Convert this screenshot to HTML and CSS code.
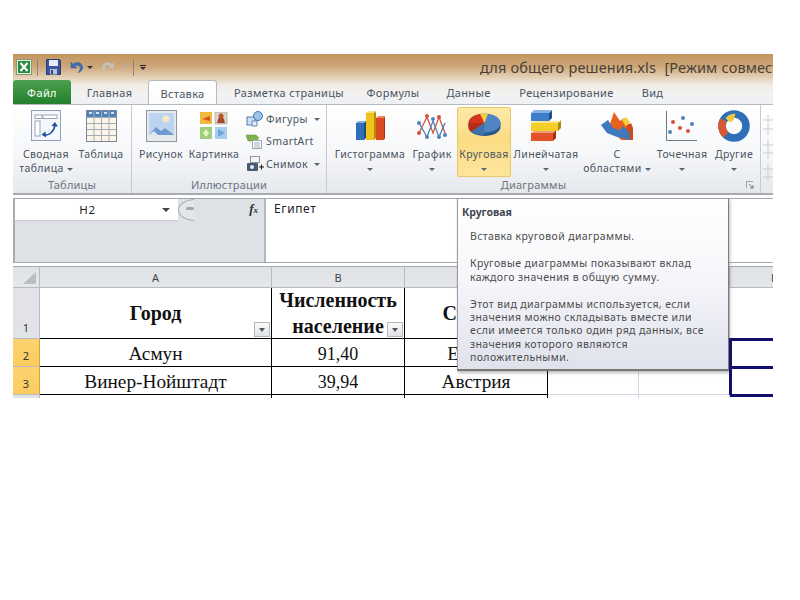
FILE: index.html
```html
<!DOCTYPE html>
<html lang="ru">
<head>
<meta charset="utf-8">
<title>Excel</title>
<link rel="stylesheet" href="styles.css">
</head>
<body>
<main class="window">
  <header class="chrome">
    <div class="titlebar">
      <div class="qat">
        <svg class="qi" width="16" height="18" viewBox="0 0 16 18"><rect x=".5" y="1.500" width="15" height="15" fill="#e8efdd" stroke="#7f9a77"/><rect x="2" y="3" width="12" height="12" fill="#2c8a3c"/><path d="M4.500 5l7 8M11.500 5l-7 8" stroke="#fff" stroke-width="2"/></svg>
        <i class="qsep qsep1"></i>
        <svg class="qi qsave" width="15" height="16" viewBox="0 0 15 16"><path d="M.5.5h13l1 1v14H.5z" fill="#3c54a4" stroke="#2b3a78"/><rect x="3" y="1" width="9" height="6" fill="#e7ecf6"/><rect x="4" y="10" width="7" height="5.500" fill="#b9c1d6"/><rect x="5" y="11" width="2" height="4" fill="#34447e"/></svg>
        <svg class="qi qundo" width="14" height="13" viewBox="0 0 14 13"><path d="M2 1v6h6L5.500 5C7 3.500 10 4 11 6c.7 1.800-.3 4-2 5.500 3.500-.7 5-3.500 4.500-6C13 2 8 0 4 3.300z" fill="#3f6fb4" stroke="#2f5a98" stroke-width=".5"/></svg>
        <i class="arrow arrow-ink qarr1"></i>
        <svg class="qi qredo" width="14" height="13" viewBox="0 0 14 13"><path d="M12 1v6H6l2.500-2C7 3.500 4 4 3 6c-.7 1.800.3 4 2 5.500C1.500 10.800 0 8 .5 5.500 1 2 6 0 10 3.300z" fill="#c3c3bd"/></svg>
        <i class="arrow arrow-dim qarr2"></i>
        <i class="qsep qsep2"></i>
        <span class="qcustom"><b></b><i class="arrow arrow-ink"></i></span>
      </div>
      <div class="doc">для общего решения.xls&nbsp; [Режим совместимости]</div>
    </div>
    <nav class="tabs">
      <span class="tab tab-file">Файл</span>
      <span class="tab">Главная</span>
      <span class="tab tab-on">Вставка</span>
      <span class="tab">Разметка страницы</span>
      <span class="tab">Формулы</span>
      <span class="tab">Данные</span>
      <span class="tab">Рецензирование</span>
      <span class="tab">Вид</span>
    </nav>
  </header>

  <section class="ribbon">
    <div class="group g-tables">
      <div class="tools">
        <div class="big w-pivot">
          <svg width="31" height="32" viewBox="0 0 31 32"><rect x=".5" y=".5" width="29" height="30" fill="#f4f7fb" stroke="#8f9fb5"/><rect x="4" y="5" width="7" height="3.500" fill="#fff" stroke="#9aa5b5"/><rect x="12" y="5" width="14" height="3.500" fill="#fff" stroke="#9aa5b5"/><rect x="4" y="11" width="5" height="15" fill="#fff" stroke="#9aa5b5"/><path d="M12 25c6 1 11-3 12-10" fill="none" stroke="#1f4f9e" stroke-width="1.600"/><path d="M20.500 16l3.500-4 3 4.500zM14.500 21.500l-4 3 4.500 3z" fill="#1f4f9e"/></svg>
          <span>Сводная<br>таблица <i class="arrow"></i></span>
        </div>
        <div class="big w-table">
          <svg width="31" height="32" viewBox="0 0 31 32"><rect x=".5" y=".5" width="30" height="31" fill="#fdf6e8" stroke="#7d8794"/><rect x="1" y="1" width="29" height="6" fill="#4f81bd"/><path d="M1 7.500h29M1 13.500h29M1 19.500h29M1 25.500h29M8 1v30M15.500 1v30M23 1v30" stroke="#a4aeb9" fill="none"/><path d="M3 3h3M10 3h3M18 3h3M25 3h3" stroke="#fff" stroke-width="1.500"/></svg>
          <span>Таблица</span>
        </div>
      </div>
      <div class="glabel">Таблицы</div>
    </div>

    <div class="group g-illus">
      <div class="tools">
        <div class="big w-pic">
          <svg width="31" height="32" viewBox="0 0 31 32"><rect x=".5" y=".5" width="30" height="31" fill="#e6e8ec" stroke="#8d96a2"/><rect x="3" y="3" width="25" height="22" fill="#bcd4ef"/><circle cx="20" cy="9" r="3.500" fill="#f6e9c2"/><path d="M3 25l7-8 5 4 4-3 9 7z" fill="#6f9ad0"/><path d="M3 25l5-4 4 4z" fill="#dbe7f5"/></svg>
          <span>Рисунок</span>
        </div>
        <div class="big w-clip">
          <svg class="clip" width="28" height="28" viewBox="0 0 28 28"><rect x="0" y="0" width="12" height="12" fill="#f0b83e"/><path d="M2 7l8-3v5z" fill="#d9531e"/><rect x="15" y="0" width="12" height="12" fill="#d9d3c8" stroke="#9a9488" stroke-width=".5"/><circle cx="21" cy="4" r="2.500" fill="#b4552b"/><path d="M17 11l1.500-5h5l1.500 5z" fill="#a7482e"/><rect x="0" y="15" width="12" height="12" fill="#9fcf7d"/><path d="M6 17l3 4-3 4-3-4z" fill="#e8f4c8"/><rect x="15" y="15" width="12" height="12" fill="#a9cdee"/><path d="M18 17l7 4-7 4z" fill="#6ea4dc"/></svg>
          <span>Картинка</span>
        </div>
        <div class="smalls">
          <div class="small"><svg width="18" height="18" viewBox="0 0 18 18"><rect x="1" y="7" width="8" height="8" fill="#cfe0f2" stroke="#4f7fb5"/><circle cx="12" cy="6" r="4.500" fill="#9cc3ea" stroke="#3f73ad"/><path d="M6 11h5v5H6z" fill="#e2edf8" stroke="#5c89ba"/></svg><span>Фигуры</span><i class="arrow"></i></div>
          <div class="small"><svg width="18" height="18" viewBox="0 0 18 18"><path d="M0 3h10l3 3-3 3H2z" fill="#7fb24a" stroke="#5f8c34" stroke-width=".5"/><rect x="6.500" y="8.500" width="9" height="8" fill="#fff" stroke="#9ea8b2"/><path d="M8 11h6M8 13h6M8 15h6" stroke="#9ab0c6"/></svg><span>SmartArt</span></div>
          <div class="small"><svg width="18" height="18" viewBox="0 0 18 18"><rect x="4.500" y="1.500" width="9" height="6" fill="none" stroke="#333" stroke-dasharray="1 1"/><rect x="1" y="8" width="11" height="8" rx="1" fill="#4a5a74"/><circle cx="6" cy="12" r="2" fill="#e6ecf4"/><path d="M13 12h5M15.500 9.500v5" stroke="#111"/></svg><span>Снимок</span><i class="arrow"></i></div>
        </div>
      </div>
      <div class="glabel">Иллюстрации</div>
    </div>

    <div class="group g-charts">
      <div class="tools">
        <div class="big w-hist">
          <svg width="31" height="32" viewBox="0 0 31 32"><path d="M1 13h8v17H1z" fill="#2f6fb8"/><path d="M1 13l2-2h8l-2 2z" fill="#7fb0e4"/><path d="M9 13l2-2v17l-2 2z" fill="#1c4a85"/><path d="M11 3h8v27h-8z" fill="#f0c21e"/><path d="M11 3l2-2h8l-2 2z" fill="#f8e27a"/><path d="M19 3l2-2v27l-2 2z" fill="#b58a0e"/><path d="M21 8h8v22h-8z" fill="#dd4a22"/><path d="M21 8l2-2h7l-1 2z" fill="#ef8a62"/><path d="M29 8l1-2v22l-1 2z" fill="#a9300f"/></svg>
          <span>Гистограмма<br><i class="arrow"></i></span>
        </div>
        <div class="big w-line">
          <svg width="30" height="30" viewBox="0 0 30 30"><path d="M2 22L10 6l6 16 6-16 6 16" fill="none" stroke="#d6503a" stroke-width="1.300"/><path d="M2 12l8 14 6-16 6 16 6-14" fill="none" stroke="#4f81bd" stroke-width="1.300"/><g fill="#d6503a"><circle cx="10" cy="5" r="2"/><circle cx="22" cy="6" r="2"/><circle cx="2" cy="22" r="2"/></g><g fill="#4f81bd"><circle cx="2" cy="12" r="2"/><circle cx="10" cy="26" r="2"/><circle cx="16" cy="8" r="2"/><circle cx="28" cy="24" r="2"/><circle cx="22" cy="26" r="2"/></g></svg>
          <span>График<br><i class="arrow"></i></span>
        </div>
        <div class="big w-pie on">
          <svg width="33" height="24" viewBox="0 0 33 24"><path d="M.5 10v4c0 5 7 9 16 9s16-4 16-9v-4z" fill="#27588f"/><ellipse cx="16.500" cy="10" rx="16" ry="9.500" fill="#4f85c4"/><path d="M16.500 10L.5 10C.5 6 6 1.500 13 .7z" fill="#d9341c"/><path d="M.5 10v4c0 2 1 3.500 2.500 5l13.500-9z" fill="#b82a14"/><path d="M16.500 10L12 .8C14 .4 17 .3 20 .8z" fill="#f4cd3d"/><path d="M16.500 10L3 18.500c3 2.500 8 3.500 13.500 3.500z" fill="#3f71ab"/></svg>
          <span>Круговая<br><i class="arrow"></i></span>
        </div>
        <div class="big w-bar">
          <svg width="31" height="32" viewBox="0 0 31 32"><path d="M0 3h18v8H0z" fill="#3f7dc8"/><path d="M18 3l3-3v8l-3 3z" fill="#1f4f8f"/><path d="M0 3l3-3h18l-3 3z" fill="#87b3e4"/><path d="M0 13h27v8H0z" fill="#f3cd28"/><path d="M27 13l3-3v8l-3 3z" fill="#a98a12"/><path d="M0 13l3-2h27l-3 2z" fill="#fae58a"/><path d="M0 23h22v8H0z" fill="#e4522a"/><path d="M22 23l3-3v8l-3 3z" fill="#a3330f"/><path d="M0 23l3-2h22l-3 2z" fill="#f39a72"/></svg>
          <span>Линейчатая<br><i class="arrow"></i></span>
        </div>
        <div class="big w-area">
          <svg width="32" height="30" viewBox="0 0 32 30"><path d="M8 16L13 1l6 9 4-3 8 9v13H20z" fill="#e9601f"/><path d="M21 9l4-3 4 5-4 5z" fill="#f3cd3a"/><path d="M25 15l5-3 2 5v12h-4z" fill="#c94d1f"/><path d="M0 14l7-5 5 8 7 2 3-4 6 6 1 8-13-3L6 22z" fill="#3f78bc"/></svg>
          <span>С<br>областями <i class="arrow"></i></span>
        </div>
        <div class="big w-scat">
          <svg width="32" height="32" viewBox="0 0 32 32"><path d="M.5 1v29.500H31" fill="none" stroke="#6a7684"/><g fill="#d6503a"><circle cx="7" cy="12" r="2"/><circle cx="14" cy="18" r="2"/><circle cx="22" cy="21" r="2"/></g><g fill="#4f81bd"><circle cx="4" cy="22" r="2"/><circle cx="17" cy="8" r="2"/><circle cx="26" cy="14" r="2"/></g></svg>
          <span>Точечная<br><i class="arrow"></i></span>
        </div>
        <div class="big w-other">
          <svg width="32" height="32" viewBox="0 0 32 32"><circle cx="16" cy="16" r="12" fill="none" stroke="#2f6fb8" stroke-width="7.500"/><path d="M5.500 10A12 12 0 0 0 8 25" fill="none" stroke="#d95a32" stroke-width="7.500"/><path d="M8 8c2-2 5-4 9-4l-2 6-3 2z" fill="#f2c93b" stroke="#f2c93b"/></svg>
          <span>Другие<br><i class="arrow"></i></span>
        </div>
      </div>
      <div class="glabel glabel-charts">Диаграммы<svg class="launcher" width="8" height="8" viewBox="0 0 8 8"><path d="M.5 7V.5H7" fill="none" stroke="#9aa3ad"/><path d="M3 3l4 4M7 4v3H4" fill="none" stroke="#6d7a88"/></svg></div>
    </div>

    <div class="group g-spark">
      <svg width="12" height="66" viewBox="0 0 12 66"><g fill="none" stroke="#c9ced4"><path d="M6 0v20M1 5h10M1 14h10"/><path d="M6 24v20M1 30h10M1 38h10"/><path d="M6 48v18M1 54h10M1 62h10"/></g></svg>
    </div>
  </section>

  <section class="formula">
    <div class="names">
      <div class="namebox"><span class="cellname">H2</span><i class="arrow arrow-dark"></i></div>
      <div class="namefill"></div>
    </div>
    <div class="fxbar">
      <span class="knob"><b></b></span>
      <em class="fx">f<small>x</small></em>
    </div>
    <div class="entry">Египет</div>
  </section>

  <section class="sheet">
    <div class="hd corner"><svg width="14" height="12" viewBox="0 0 14 12"><path d="M14 0v12H1z" fill="#b9bec6"/></svg></div>
    <div class="hd">A</div><div class="hd">B</div><div class="hd">C</div><div class="hd">D</div><div class="hd">E</div><div class="hd hd-f">F</div>

    <div class="rh"><span>1</span></div>
    <div class="c c-head"><b>Город</b><i class="filter"></i></div>
    <div class="c c-head c-wrap"><b>Численность<br>население</b><i class="filter"></i></div>
    <div class="c c-head"><b>Страна</b></div>
    <div class="c c-plain"></div><div class="c c-plain"></div><div class="c c-plain c-last"></div>

    <div class="rh rh-on"><span>2</span></div>
    <div class="c c-data">Асмун</div><div class="c c-data c-num">91,40</div><div class="c c-data">Египет</div>
    <div class="c c-plain c-line"></div><div class="c c-plain c-line"></div><div class="c c-sel"></div>

    <div class="rh rh-on"><span>3</span></div>
    <div class="c c-data">Винер-Нойштадт</div><div class="c c-data c-num">39,94</div><div class="c c-data">Австрия</div>
    <div class="c c-plain c-line"></div><div class="c c-plain c-line"></div><div class="c c-sel c-sel2"></div>

    <div class="rh"></div>
    <div class="c c-end"></div><div class="c c-end"></div><div class="c c-end"></div>
    <div class="c c-plain"></div><div class="c c-plain"></div><div class="c c-plain c-last"></div>
  </section>

  <aside class="tip">
    <h4>Круговая</h4>
    <p>Вставка круговой диаграммы.</p>
    <p>Круговые диаграммы показывают вклад<br>каждого значения в общую сумму.</p>
    <p>Этот вид диаграммы используется, если<br>значения можно складывать вместе или<br>если имеется только один ряд данных, все<br>значения которого являются<br>положительными.</p>
  </aside>
</main>
</body>
</html>
```

FILE: styles.css
```css
html, body { margin: 0; padding: 0; background: #fff; }
body { padding: 54px 27px 0 13px; font-family: "Noto Sans", "DejaVu Sans", sans-serif; font-size: 11px; color: #4a5461; }
.window { position: relative; width: 760px; height: 344px; overflow: hidden; background: #fff; }

.arrow { display: inline-block; width: 0; height: 0; border: 3px solid transparent; border-top: 3px solid #5c6672; border-bottom: 0; vertical-align: middle; }
.arrow-ink { border-top-color: #333; }
.arrow-dim { border-top-color: #b5b1a8; }
.arrow-dark { border-width: 4px; border-bottom: 0; border-top-color: #444; }

.chrome { background: linear-gradient(#c3965e 0, #cda77a 25%, #e2cdb0 45%, #f1ece4 62%, #f2f2f2 80%, #eef0f3 100%); height: 50px; }
.titlebar { height: 26px; display: flex; justify-content: space-between; align-items: center; }
.qat { display: flex; align-items: center; padding-left: 3px; height: 26px; }
.qsep { width: 1px; height: 17px; background: #8d8474; }
.qsep1 { margin: 0 8px 0 5px; }
.qsave { margin-right: 8px; }
.qundo { margin-right: 4px; }
.qarr1 { margin-right: 9px; }
.qredo { margin-right: 5px; }
.qarr2 { margin-right: 6px; }
.qsep2 { margin: 0 5px 0 0; }
.qcustom { display: flex; flex-direction: column; gap: 1px; align-items: center; margin-left: 1px; }
.qcustom b { width: 6px; height: 1px; background: #222; }
.doc { width: 293px; white-space: nowrap; overflow: hidden; font-size: 14.5px; letter-spacing: .1px; word-spacing: .4px; color: #4a4036; }

.tabs { display: grid; grid-template-columns: 58px 77px 69px 144px 64px 87px 109px 63px; height: 24px; align-items: stretch; justify-content: start; }
.tab { display: flex; align-items: center; justify-content: center; font-size: 11px; letter-spacing: .35px; color: #4a5461; padding-top: 1px; }
.tab-file { background: linear-gradient(#4da04f, #23802c); color: #fff; border-radius: 3px 3px 0 0; }
.tab-on { background: linear-gradient(#fff, #fafbfc); border: 1px solid #b5babf; border-bottom: 0; border-radius: 3px 3px 0 0; }

.ribbon { display: flex; border-top: 1px solid #b5babf; border-bottom: 2px solid #a7abb0; background: linear-gradient(#fff 0, #f6f7f9 55%, #e5e8ec 100%); box-sizing: border-box; height: 91px; }
.group { display: flex; flex-direction: column; border-right: 1px solid #c7cbd1; box-sizing: border-box; }
.g-tables { width: 119px; }
.g-illus { width: 195px; }
.g-charts { width: 434px; }
.g-spark { flex: 1; border: 0; padding: 10px 0 0 1px; overflow: hidden; }
.tools { flex: 1; display: flex; }
.glabel { position: relative; height: 15px; line-height: 14px; text-align: center; color: #6b7480; font-size: 11px; letter-spacing: .2px; }
.glabel-charts { padding-right: 20px; }
.launcher { position: absolute; right: 6px; top: 3px; }

.big { box-sizing: border-box; display: flex; flex-direction: column; align-items: center; height: 70px; margin-top: 2px; padding-top: 3px; font-size: 10.5px; letter-spacing: .35px; line-height: 14px; text-align: center; white-space: nowrap; }
.big svg { height: 32px; margin-bottom: 5px; flex: none; }
.big svg.clip { margin-top: 2px; margin-bottom: 7px; height: 28px; }
.big.on { background: linear-gradient(#fde9a8, #fbdc84 45%, #fde59c); border: 1px solid #e6c86a; border-radius: 2px; padding-top: 2px; }
.w-pivot { width: 66px; }
.w-table { width: 44px; }
.w-pic { width: 46px; margin-left: 6px; }
.w-clip { width: 52px; margin-left: 4px; }
.w-hist { width: 72px; margin-left: 7px; }
.w-line { width: 44px; margin-left: 4px; }
.w-pie { width: 54px; margin-left: 3px; }
.w-pie svg { height: 24px; margin: 3px 0 10px; }
.w-bar { width: 66px; margin-left: 2px; }
.w-area { width: 68px; margin-left: 4px; }
.w-scat { width: 54px; margin-left: 4px; }
.w-other { width: 42px; margin-left: 4px; }

.smalls { display: flex; flex-direction: column; gap: 5px; padding: 5px 0 0 6px; }
.small { display: flex; align-items: center; gap: 2px; height: 18px; font-size: 10.5px; letter-spacing: .4px; }
.small:last-child { margin-top: -1px; }
.small:nth-child(2) { margin-top: -1px; }
.small:nth-child(3) { margin-top: 0; }
.small .arrow { margin-left: 4px; }

.formula { display: flex; margin-top: 3px; background: #fff; border-top: 1px solid #a4a7ac; box-sizing: border-box; height: 65px; border-bottom: 1px solid #a4a7ac; }
.names { width: 165px; display: flex; flex-direction: column; border-left: 2px solid #a9abb0; box-sizing: border-box; }
.namebox { height: 21px; display: flex; align-items: center; justify-content: space-between; padding: 0 8px 0 0; background: #fff; border-bottom: 1px solid #c4c7cc; }
.cellname { flex: 1; text-align: center; color: #222; font-size: 11.5px; letter-spacing: .6px; padding-right: 2px; }
.namefill { flex: 1; background: #dee1e6; }
.fxbar { width: 88px; position: relative; background: #dee1e6; border-right: 2px solid #b4b7bd; box-sizing: border-box; overflow: hidden; }
.knob { position: absolute; left: 0; top: 0; width: 34px; height: 22px; border-radius: 50%; border: 1px solid #a5a9af; border-right: 0; background: #e4e6ea; box-sizing: border-box; clip-path: inset(0 18px 0 0); }
.knob b { position: absolute; left: 7px; top: 7px; width: 8px; height: 3px; border-radius: 2px; background: #a2a7ae; }
.fx { position: absolute; right: 6px; top: 2px; font: italic bold 13px "Liberation Serif", serif; color: #333; }
.fx small { font-size: 9px; }
.entry { flex: 1; padding: 1px 0 0 8px; font-size: 12px; letter-spacing: .6px; color: #222; }

.sheet { display: grid; grid-template-columns: 27px 232px 133px 143px 91px 91px 43px; grid-template-rows: 22px 51px 28px 28px 10px; margin-top: 3px; font-family: "Liberation Serif", serif; font-size: 19.3px; color: #111; }
.hd { display: flex; align-items: center; justify-content: center; background: linear-gradient(#dfe2e6, #e4e6ea); border-right: 1px solid #b7bbc1; border-bottom: 1px solid #b7bbc1; border-top: 1px solid #a5a8ae; box-sizing: border-box; font: 11px "Noto Sans", sans-serif; color: #444; }
.corner { align-items: flex-end; justify-content: flex-end; padding: 0 3px 3px 0; }
.hd-f { justify-content: flex-start; padding-left: 41px; border-right: 0; overflow: hidden; }
.rh { display: flex; align-items: flex-end; justify-content: center; background: #e1e3e8; border-right: 1px solid #b7bbc1; border-bottom: 1px solid #b7bbc1; box-sizing: border-box; font: 11px "Noto Sans", sans-serif; color: #333; padding-bottom: 3px; }
.rh-on { background: linear-gradient(#fcd36f, #fbcc5f); border-right: 1px solid #d6a33a; }
.c { position: relative; display: flex; align-items: center; justify-content: center; box-sizing: border-box; border-right: 1px solid #000; border-bottom: 1px solid #000; white-space: nowrap; }
.c-data { padding-top: 3px; }
.c-head { font-size: 20px; }
.c-wrap { line-height: 26px; text-align: center; }
.c-num { font-size: 18px; }
.c-plain { border-right: 1px solid #d0d7e5; border-bottom: 1px solid #d0d7e5; }
.c-line { border-bottom-color: #d0d7e5; }
.c-last { border-right: 0; }
.c-end { border-bottom: 0; }
.c-sel { border: 0; border-top: 3px solid #0f0f70; border-left: 3px solid #0f0f70; margin: -1px 0 -1px -1px; }
.c-sel2 { border-bottom: 3px solid #0f0f70; margin-bottom: -2px; }
.filter { position: absolute; right: 1px; bottom: 1px; width: 16px; height: 15px; box-sizing: border-box; border: 1px solid #b4b8bd; background: linear-gradient(#fbfbfc, #dfe2e6); }
.filter::after { content: ""; position: absolute; left: 4px; top: 5px; border: 3px solid transparent; border-top: 4px solid #555; border-bottom: 0; }

.tip { position: absolute; left: 444px; top: 144px; width: 272px; height: 173px; box-sizing: border-box; padding: 7px 4px 0; background: linear-gradient(#fff 0, #f7f7fb 45%, #dfe1ec 100%); border: 1px solid #9c9ca0; border-right-color: #7d7d80; border-bottom: 2px solid #777; box-shadow: 1px 2px 3px rgba(60,60,60,.35); font-size: 10.5px; letter-spacing: .38px; line-height: 13.4px; color: #4c4c4c; }
.tip h4 { margin: 0 0 11px; font-size: 10.5px; letter-spacing: 0; font-weight: 700; color: #3f4650; }
.tip p { margin: 0 0 13.500px 8px; white-space: nowrap; }
```
